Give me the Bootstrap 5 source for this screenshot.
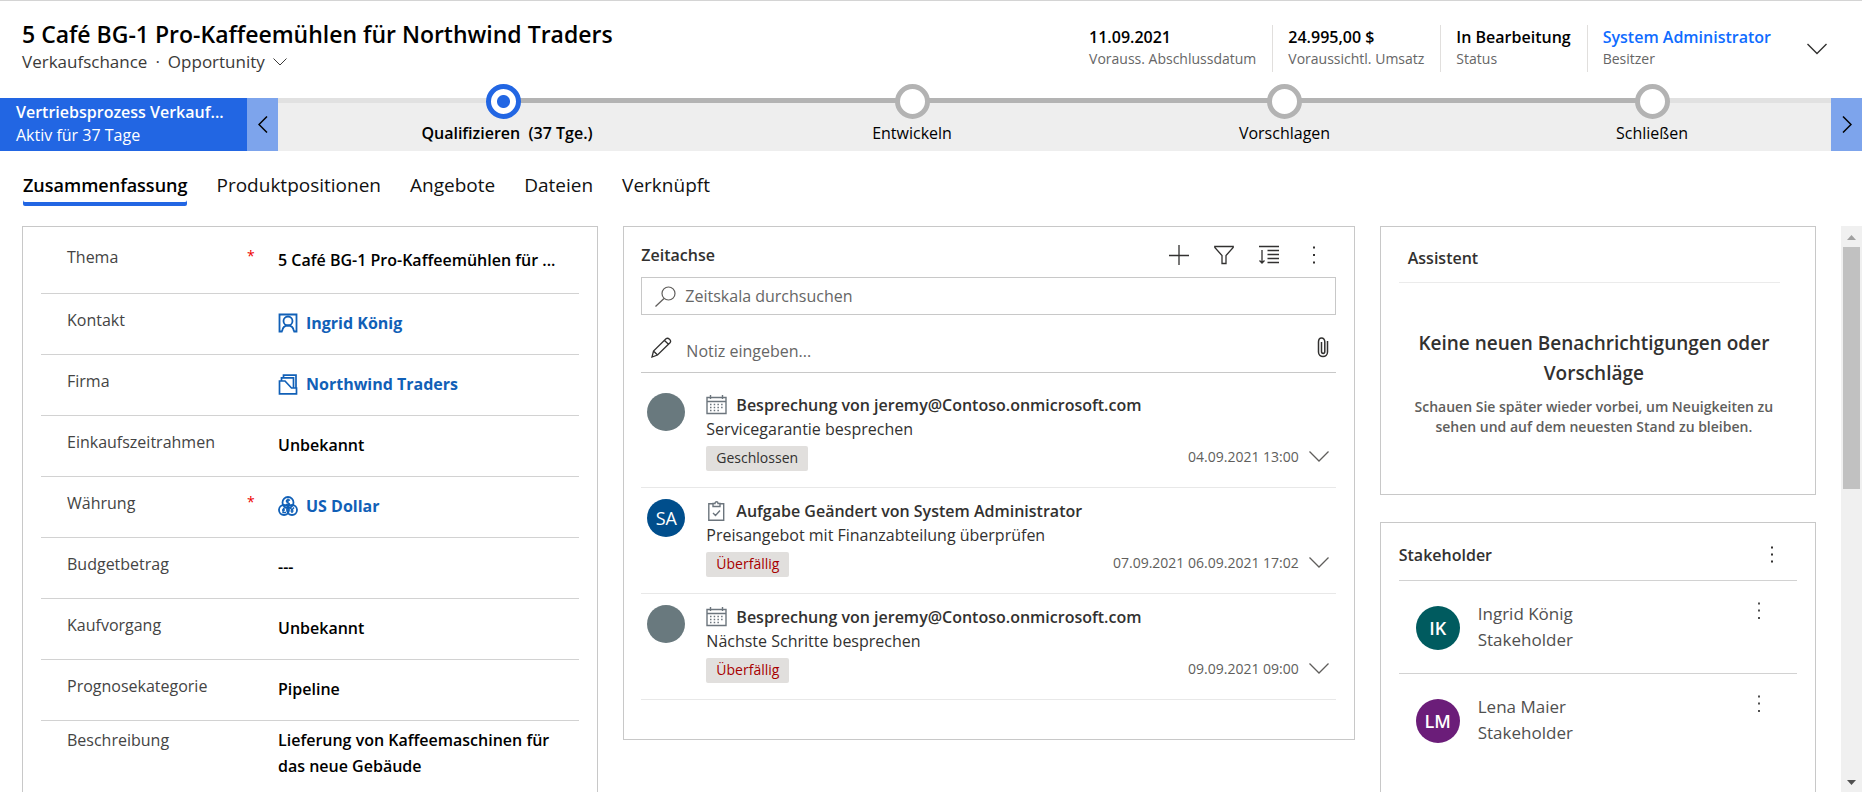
<!DOCTYPE html>
<html lang="de">
<head>
<meta charset="utf-8">
<meta name="viewport" content="width=device-width, initial-scale=1">
<title>Verkaufschance – Northwind Traders</title>
<link href="https://cdn.jsdelivr.net/npm/bootstrap@5.3.0/dist/css/bootstrap.min.css" rel="stylesheet">
<style>
  body { font-family: "Open Sans", "Noto Sans", sans-serif; font-size: 17px; line-height: 26px; color: #323130; background: #fff; }
  svg { fill: none; stroke: currentColor; flex: none; display: block; }
  a { text-decoration: none; }
  .plain-btn { border: 0; background: none; padding: 0; color: inherit; display: inline-flex; align-items: center; justify-content: center; }
  .fw-semi { font-weight: 600; }

  .record-head { border-top: 1px solid #d4d4d4; padding: 16px 35px 10px 22px; }
  .record-title { font-size: 23px; line-height: 34px; font-weight: 600; color: #000; margin: 0; }
  .record-sub { font-size: 17px; line-height: 22px; color: #3b3a39; }
  .head-fact { border-left: 1px solid #e1dfdd; padding: 0 16px 0 15px; height: 47px; color: #000; }
  .head-fact:first-child { border-left: 0; }
  .head-fact dt { font-size: 14px; line-height: 22px; font-weight: 400; color: #666; }
  .head-fact dd { font-size: 16px; line-height: 22px; font-weight: 600; margin: 1px 0 0; }
  .head-fact a { color: #0f6cff; }

  .process-bar { min-height: 53px; background: #eee; margin-top: 15px; }
  .process-name { width: 247px; background: #2266e3; color: #fff; padding: 2px 16px; font-size: 16px; line-height: 23px; }
  .process-name .fw-semi { line-height: 24px; }
  .process-nav { width: 31px; background: #7da4ec; color: #000; }
  .stage-list { display: grid; grid-template-columns: 450fr 368fr 377fr 358fr; }
  .stage-item { text-align: center; color: #000; font-size: 16px; line-height: 28px; background: linear-gradient(#b3b3b3, #b3b3b3) top / 100% 5px no-repeat; }
  .stage-item:first-child { background-image: linear-gradient(90deg, #e1e1e1 50%, #b3b3b3 50%); }
  .stage-item:last-child { background-image: linear-gradient(90deg, #b3b3b3 50%, #e1e1e1 50%); }
  .stage-dot { width: 35px; height: 35px; border: 5px solid #b3b3b3; border-radius: 50%; background: #fff; margin: -14px auto 0; display: block; }
  .stage-dot.current { border-color: #2266e3; background: radial-gradient(circle, #2266e3 6px, #fff 7px); }

  .form-tabs { padding: 19px 23px 4px; gap: 29px; }
  .form-tabs .nav-link { padding: 0; font-size: 19px; line-height: 30px; height: 36px; color: #111; border-radius: 0; }
  .form-tabs .nav-link.active { font-size: 18px; font-weight: 600; color: #000; box-shadow: inset 0 -4px #2266e3; border-radius: 2px; }

  .form-grid { display: grid; grid-template-columns: 576fr 731fr 436fr; gap: 25px; padding: 0 25px 0 22px; align-items: start; }
  .panel-box { border: 1px solid #c8c8c8; background: #fff; }

  .field-row { display: grid; grid-template-columns: 166px 45px 1fr; margin: 0 18px; padding-left: 26px; height: 61px; padding-top: 13px; border-bottom: 1px solid #d2d2d2; font-size: 16px; }
  .field-row:first-child { height: 67px; padding-top: 17px; }
  .field-row:last-child { border: 0; height: 100px; padding-top: 6px; }
  .field-row label, .field-row .lbl { color: #444; }
  .field-row .req { color: #e00; font-size: 14px; line-height: 24px; padding-left: 14px; }
  .field-val { font-weight: 600; color: #000; padding-top: 3px; min-width: 0; }
  .field-row:last-child .field-val { padding-top: 0; }
  .field-val input { font: inherit; color: inherit; border: 0; padding: 0; width: 100%; line-height: 26px; height: 26px; text-overflow: ellipsis; outline: 0; display: block; background: none; }
  .field-val a { color: #1160b7; font-weight: 700; gap: 8px; }

  .timeline { padding: 13px 18px 0 17px; height: 514px; }
  .tl-bar { margin-bottom: 7px; }
  .tl-tools { gap: 25px; padding-right: 12px; }
  .tl-search { height: 38px; border: 1px solid #c8c8c8; padding-left: 13px; gap: 9px; color: #605e5c; }
  .tl-search input, .tl-note input { border: 0; outline: 0; flex: 1; min-width: 0; padding: 0; color: #605e5c; font-size: 16px; }
  .tl-search input::placeholder, .tl-note input::placeholder { color: #666; opacity: 1; }
  .tl-note { height: 58px; border-bottom: 1px solid #c8c8c8; padding: 10px 7px 2px 10px; gap: 14px; }
  .tl-note input { padding-top: 6px; }
  .tl-list { padding-top: 9px; }
  .tl-item { height: 106px; border-bottom: 1px solid #e8e8e8; padding: 11px 7px 0 6px; gap: 21px; }
  .face { width: 38px; height: 38px; border-radius: 50%; background: #69797e; color: #fff; font-size: 18px; display: flex; align-items: center; justify-content: center; flex: none; }
  .tl-head { font-size: 16px; line-height: 24px; font-weight: 600; gap: 9px; }
  .tl-text { font-size: 16px; line-height: 25px; }
  .tl-tag { background: #e1dfdd; border-radius: 2px; font-size: 14px; line-height: 24px; height: 25px; padding: 0 10px; color: #323130; }
  .tl-tag.late { color: #a80000; }
  .tl-date { font-size: 14px; color: #605e5c; gap: 10px; line-height: 22px; }

  .assist { height: 269px; padding: 16px 35px 0 18px; }
  .assist h2, .tl-title, .stake h2 { font-size: 16px; line-height: 30px; font-weight: 600; margin: 0; }
  .assist h2 { padding: 0 9px 9px; border-bottom: 1px solid #ebebeb; }
  .assist-msg { padding: 45px 0 0; margin-right: -9px; text-align: center; font-weight: 600; font-size: 19px; line-height: 30px; }
  .assist-msg small { display: block; font-size: 14px; line-height: 20px; font-weight: 600; color: #605e5c; margin-top: 9px; }
  .stake { padding: 17px 18px 0; height: 300px; margin-top: 27px; }
  .stake-head { padding: 0 22px 10px 0; border-bottom: 1px solid #d2d2d2; }
  .stake-row { height: 93px; border-bottom: 1px solid #d2d2d2; padding: 20px 35px 0 17px; gap: 18px; color: #505050; }
  .stake-row:last-child { border: 0; }
  .stake-row .face { width: 44px; height: 44px; margin-top: 5px; font-weight: 600; }

  .scroll-track { width: 21px; background: #f0f0f0; padding: 0 2px; }
  .scroll-track svg { fill: #a0a0a0; stroke: none; }
  .scroll-thumb { height: 242px; background: #c1c1c1; }
</style>
</head>
<body class="vh-100 d-flex flex-column overflow-hidden">

<header class="record-head d-flex justify-content-between">
  <div>
    <h1 class="record-title">5 Café BG-1 Pro-Kaffeemühlen für Northwind Traders</h1>
    <div class="record-sub d-flex align-items-center">
      <span>Verkaufschance</span><span class="px-2">·</span>
      <button class="plain-btn" type="button">Opportunity
        <svg class="ms-2" width="14" height="8" viewBox="0 0 14 8"><path d="M.5 .5L7 7L13.500 .5"/></svg>
      </button>
    </div>
  </div>
  <div class="d-flex">
    <dl class="d-flex mb-0 mt-2">
      <div class="head-fact d-flex flex-column-reverse justify-content-end"><dt>Vorauss. Abschlussdatum</dt><dd>11.09.2021</dd></div>
      <div class="head-fact d-flex flex-column-reverse justify-content-end"><dt>Voraussichtl. Umsatz</dt><dd>24.995,00 $</dd></div>
      <div class="head-fact d-flex flex-column-reverse justify-content-end"><dt>Status</dt><dd>In Bearbeitung</dd></div>
      <div class="head-fact d-flex flex-column-reverse justify-content-end"><dt>Besitzer</dt><dd><a href="#">System Administrator</a></dd></div>
    </dl>
    <button class="plain-btn ps-3 ms-1 mt-2" type="button" aria-label="Mehr Kopffelder">
      <svg width="20" height="12" viewBox="0 0 20 12" stroke-width="1.400"><path d="M.5 1L10 10.500L19.500 1"/></svg>
    </button>
  </div>
</header>

<section class="process-bar d-flex">
  <div class="process-name">
    <div class="fw-semi text-nowrap">Vertriebsprozess Verkauf...</div>
    <div>Aktiv für 37 Tage</div>
  </div>
  <button class="plain-btn process-nav" type="button" aria-label="Zurück">
    <svg width="10" height="17" viewBox="0 0 10 17" stroke-width="1.500"><path d="M9 .5L1 8.500L9 16.500"/></svg>
  </button>
  <div class="stage-list flex-grow-1">
    <div class="stage-item"><span class="stage-dot current"></span><span class="fw-semi ps-2">Qualifizieren&nbsp; (37 Tge.)</span></div>
    <div class="stage-item"><span class="stage-dot"></span>Entwickeln</div>
    <div class="stage-item"><span class="stage-dot"></span>Vorschlagen</div>
    <div class="stage-item"><span class="stage-dot"></span>Schließen</div>
  </div>
  <button class="plain-btn process-nav" type="button" aria-label="Weiter">
    <svg width="10" height="17" viewBox="0 0 10 17" stroke-width="1.500"><path d="M1 .5L9 8.500L1 16.500"/></svg>
  </button>
</section>

<nav class="nav form-tabs flex-nowrap">
  <a class="nav-link active" href="#">Zusammenfassung</a>
  <a class="nav-link" href="#">Produktpositionen</a>
  <a class="nav-link" href="#">Angebote</a>
  <a class="nav-link" href="#">Dateien</a>
  <a class="nav-link" href="#">Verknüpft</a>
</nav>

<main class="d-flex flex-grow-1 overflow-hidden mt-3">
  <div class="form-grid flex-grow-1">
    <section class="panel-box">
      <div class="field-row"><label for="f1">Thema</label><span class="req">*</span><div class="field-val pe-3 me-1"><input id="f1" value="5 Café BG-1 Pro-Kaffeemühlen für ..."></div></div>
      <div class="field-row"><span class="lbl">Kontakt</span><span></span><div class="field-val"><a class="d-flex align-items-center" href="#">
        <svg width="20" height="20" viewBox="0 0 20 20" stroke-width="1.800"><path d="M4.500 18.500H1.500V1.500H18.500V18.500H15.500"/><circle cx="10" cy="8" r="4.500"/><path d="M4 18.500C4.500 14.500 7 12.500 10 12.500S15.500 14.500 16 18.500"/></svg>Ingrid König</a></div></div>
      <div class="field-row"><span class="lbl">Firma</span><span></span><div class="field-val"><a class="d-flex align-items-center" href="#">
        <svg width="20" height="21" viewBox="0 0 20 21" stroke-width="1.700"><path d="M1.500 7V19.800H18.500V14H13.500L7 7H1.500ZM3.500 7V3.800H15.500V14M5.500 3.800V1.200H18V14"/></svg>Northwind Traders</a></div></div>
      <div class="field-row"><label for="f4">Einkaufszeitrahmen</label><span></span><div class="field-val"><input id="f4" value="Unbekannt"></div></div>
      <div class="field-row"><span class="lbl">Währung</span><span class="req">*</span><div class="field-val"><a class="d-flex align-items-center" href="#">
        <svg width="20" height="20" viewBox="0 0 20 20" stroke-width="1.800"><circle cx="10" cy="6.500" r="5.500"/><circle cx="6" cy="14" r="5"/><circle cx="14" cy="14" r="5"/><path d="M12 4.500C10.500 3 8 4 8.500 5.500S12 6.500 11.500 8.500S9 9.500 8 8M10 2.500V10M7.500 12C5.500 11.500 5 12.500 5 16.500H8M4 14H7M12 11.500L14 14L16 11.500M14 14V17M12.500 15H15.500" stroke-width="1.400"/></svg>US Dollar</a></div></div>
      <div class="field-row"><label for="f6">Budgetbetrag</label><span></span><div class="field-val"><input id="f6" value="---"></div></div>
      <div class="field-row"><label for="f7">Kaufvorgang</label><span></span><div class="field-val"><input id="f7" value="Unbekannt"></div></div>
      <div class="field-row"><label for="f8">Prognosekategorie</label><span></span><div class="field-val"><input id="f8" value="Pipeline"></div></div>
      <div class="field-row"><span class="lbl">Beschreibung</span><span></span><div class="field-val pe-4">Lieferung von Kaffeemaschinen für das neue Gebäude</div></div>
    </section>

    <section class="panel-box timeline">
      <div class="tl-bar d-flex align-items-center justify-content-between">
        <h2 class="tl-title">Zeitachse</h2>
        <div class="d-flex align-items-center tl-tools">
          <button class="plain-btn" type="button" aria-label="Neu"><svg width="20" height="20" viewBox="0 0 20 20"><path d="M10 0V20M0 10.500H20" stroke-width="1.300"/></svg></button>
          <button class="plain-btn" type="button" aria-label="Filter"><svg width="20" height="20" viewBox="0 0 20 20"><path d="M.8 1.500H19.200V2.500L12 10.500V18.500H8V10.500L.8 2.500Z" stroke-width="1.300"/></svg></button>
          <button class="plain-btn" type="button" aria-label="Sortieren"><svg width="20" height="20" viewBox="0 0 20 20"><path d="M0 1.500H20M8.500 5.500H20M8.500 9.500H20M8.500 13.500H20M8.500 17.500H20M3 5V18M.5 15.500L3 18L5.500 15.500" stroke-width="1.300"/></svg></button>
          <button class="plain-btn" type="button" aria-label="Mehr"><svg width="20" height="20" viewBox="0 0 20 20"><path d="M9 2.500H11M9 10H11M9 17.500H11" stroke-width="2.200"/></svg></button>
        </div>
      </div>
      <div class="tl-search d-flex align-items-center">
        <svg width="21" height="21" viewBox="0 0 21 21" stroke-width="1.200"><circle cx="13.500" cy="7.500" r="6.500"/><path d="M9 12.500L.5 20.500"/></svg>
        <input type="text" placeholder="Zeitskala durchsuchen" aria-label="Zeitskala durchsuchen">
      </div>
      <div class="tl-note d-flex align-items-center">
        <svg width="21" height="21" viewBox="0 0 21 21" stroke-width="1.300"><path d="M1 20L2.500 14L15 1.800C17 0 21 3.500 19 5.800L6.500 18ZM2.500 14L6.500 18M13.500 3.500L17.500 7.300"/></svg>
        <input type="text" placeholder="Notiz eingeben..." aria-label="Notiz eingeben">
        <button class="plain-btn" type="button" aria-label="Anlage"><svg width="12" height="21" viewBox="0 0 12 21" stroke-width="1.500"><path d="M10.500 4V15C10.500 21 1.500 21 1.500 15V5C1.500 -.5 7.800 -.5 7.800 5V14.500C7.800 17 4.500 17 4.500 14.500V5"/></svg></button>
      </div>

      <div class="tl-list">
      <article class="tl-item d-flex">
        <span class="face"></span>
        <div class="flex-grow-1">
          <div class="tl-head d-flex align-items-center"><svg class="text-secondary" width="21" height="20" viewBox="0 0 21 20" stroke-width="1.400"><path d="M1 2.500H20V18.500H1ZM1 6.500H20M4.500 0V4M16.500 0V4"/><path d="M4 9.500H17M4 12.500H17M4 15.500H14" stroke-width="1.500" stroke-dasharray="1.500 2.200"/></svg>Besprechung von jeremy@Contoso.onmicrosoft.com</div>
          <div class="tl-text">Servicegarantie besprechen</div>
          <div class="d-flex justify-content-between align-items-center"><span class="tl-tag mt-1">Geschlossen</span><span class="tl-date d-flex align-items-center">04.09.2021 13:00<button class="plain-btn" type="button" aria-label="Aufklappen"><svg width="20" height="11" viewBox="0 0 20 11" stroke-width="1.300"><path d="M.5 .5L10 10L19.500 .5"/></svg></button></span></div>
        </div>
      </article>
      <article class="tl-item d-flex">
        <span class="face" style="background:#004e8c">SA</span>
        <div class="flex-grow-1">
          <div class="tl-head d-flex align-items-center"><svg class="text-secondary" width="21" height="20" viewBox="0 0 21 20" stroke-width="1.400"><path d="M7 2.800H2.800V19.300H17.700V2.800H14M7 2.500H9C9 .2 12 .2 12 2.500H14V5.500H7ZM7 12L9.500 14.500L14 9.500"/></svg>Aufgabe Geändert von System Administrator</div>
          <div class="tl-text">Preisangebot mit Finanzabteilung überprüfen</div>
          <div class="d-flex justify-content-between align-items-center"><span class="tl-tag late mt-1">Überfällig</span><span class="tl-date d-flex align-items-center">07.09.2021 06.09.2021 17:02<button class="plain-btn" type="button" aria-label="Aufklappen"><svg width="20" height="11" viewBox="0 0 20 11" stroke-width="1.300"><path d="M.5 .5L10 10L19.500 .5"/></svg></button></span></div>
        </div>
      </article>
      <article class="tl-item d-flex">
        <span class="face"></span>
        <div class="flex-grow-1">
          <div class="tl-head d-flex align-items-center"><svg class="text-secondary" width="21" height="20" viewBox="0 0 21 20" stroke-width="1.400"><path d="M1 2.500H20V18.500H1ZM1 6.500H20M4.500 0V4M16.500 0V4"/><path d="M4 9.500H17M4 12.500H17M4 15.500H14" stroke-width="1.500" stroke-dasharray="1.500 2.200"/></svg>Besprechung von jeremy@Contoso.onmicrosoft.com</div>
          <div class="tl-text">Nächste Schritte besprechen</div>
          <div class="d-flex justify-content-between align-items-center"><span class="tl-tag late mt-1">Überfällig</span><span class="tl-date d-flex align-items-center">09.09.2021 09:00<button class="plain-btn" type="button" aria-label="Aufklappen"><svg width="20" height="11" viewBox="0 0 20 11" stroke-width="1.300"><path d="M.5 .5L10 10L19.500 .5"/></svg></button></span></div>
        </div>
      </article>
      </div>
    </section>

    <div>
      <section class="panel-box assist">
        <h2>Assistent</h2>
        <div class="assist-msg">Keine neuen Benachrichtigungen oder Vorschläge
          <small>Schauen Sie später wieder vorbei, um Neuigkeiten zu sehen und auf dem neuesten Stand zu bleiben.</small>
        </div>
      </section>
      <section class="panel-box stake">
        <div class="stake-head d-flex align-items-center justify-content-between"><h2>Stakeholder</h2>
          <button class="plain-btn" type="button" aria-label="Mehr"><svg width="6" height="20" viewBox="0 0 6 20"><path d="M2 2.500H4M2 9.500H4M2 16.500H4" stroke-width="2"/></svg></button></div>
        <div class="stake-row d-flex align-items-start">
          <span class="face" style="background:#005b5f">IK</span>
          <div class="flex-grow-1">Ingrid König<br>Stakeholder</div>
          <button class="plain-btn" type="button" aria-label="Mehr"><svg width="6" height="20" viewBox="0 0 6 20"><path d="M2 2.500H4M2 9.500H4M2 17H4" stroke-width="2"/></svg></button>
        </div>
        <div class="stake-row d-flex align-items-start">
          <span class="face" style="background:#6b1d79">LM</span>
          <div class="flex-grow-1">Lena Maier<br>Stakeholder</div>
          <button class="plain-btn" type="button" aria-label="Mehr"><svg width="6" height="20" viewBox="0 0 6 20"><path d="M2 2.500H4M2 9.500H4M2 17H4" stroke-width="2"/></svg></button>
        </div>
      </section>
    </div>
  </div>
  <div class="scroll-track d-flex flex-column">
    <svg width="17" height="21" viewBox="0 0 17 21"><path d="M4 14L8.500 9L13 14Z"/></svg>
    <div class="scroll-thumb"></div>
    <svg class="mt-auto" width="17" height="21" viewBox="0 0 17 21"><path fill="#505050" d="M4 9L8.500 14L13 9Z"/></svg>
  </div>
</main>
<script src="https://cdn.jsdelivr.net/npm/bootstrap@5.3.0/dist/js/bootstrap.bundle.min.js"></script>
</body>
</html>
